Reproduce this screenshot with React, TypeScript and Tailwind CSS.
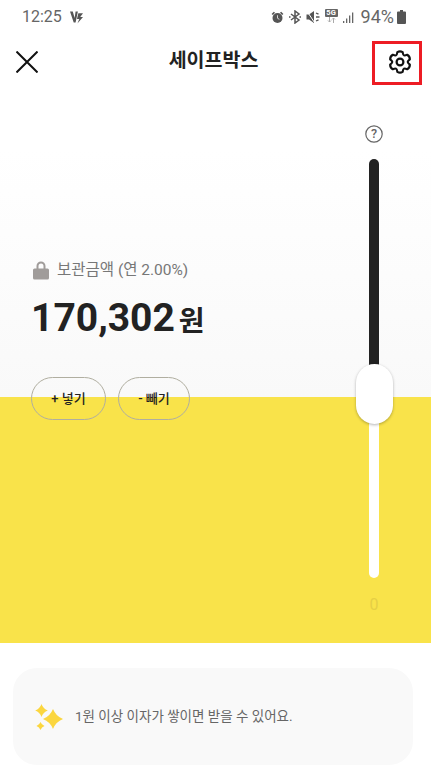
const KR = "font-['Roboto','Noto_Sans_CJK_KR',sans-serif]";

// six rounded lobes, pointy side up
function gearPath(cx: number, cy: number, outer: number, inner: number) {
  const pt = (deg: number, r: number) => {
    const a = (deg * Math.PI) / 180;
    return `${(cx + r * Math.cos(a)).toFixed(2)} ${(cy + r * Math.sin(a)).toFixed(2)}`;
  };
  let d = `M${pt(-120, inner)}`;
  for (let i = 0; i < 6; i++) {
    const a = -90 + i * 60;
    d += ` Q${pt(a - 24, inner * 0.98)} ${pt(a - 15, outer * 0.97)}`;
    d += ` Q${pt(a, outer * 1.08)} ${pt(a + 15, outer * 0.97)}`;
    d += ` Q${pt(a + 24, inner * 0.98)} ${pt(a + 30, inner)}`;
  }
  return d + 'Z';
}

function StatusIcons() {
  return (
    <div className="flex items-center">
      {/* alarm */}
      <svg width="13" height="13" viewBox="0 0 14 14" fill="#555">
        <circle cx="7" cy="7.6" r="5.4" />
        <path d="M0.6 3.2 3 0.8 4.4 2 2 4.4zM13.4 3.2 11 0.8 9.600 2 12 4.400z" />
        <path d="M7 4.600v3.200l2 1.200" stroke="#ddd" strokeWidth="1" fill="none" />
      </svg>
      {/* bluetooth */}
      <svg width="12" height="14" viewBox="0 0 12 14" fill="none" stroke="#555" strokeWidth="1.500" className="ml-[5px]">
        <path d="M2 4l8 6-4 3V1l4 3-8 6" />
        <path d="M0 7h1.500M10.500 7h1.500" />
      </svg>
      {/* mute with vibrate ticks */}
      <svg width="14" height="14" viewBox="0 0 14 14" fill="#555" className="ml-[5px]">
        <path d="M0.500 4.500h2.500L8 1v12L3 9.500H0.500z" />
        <path d="M0.500 0.500l8 12" stroke="#fff" strokeWidth="1" />
        <path d="M10 3l2.500 1.200M10 7h3.500M10 11l2.500-1.200" stroke="#555" strokeWidth="1.300" />
      </svg>
      {/* 5G */}
      <div className="ml-[5px] flex w-[13px] flex-col items-center self-start pt-[1px]">
        <span className="flex h-[8px] w-[13px] items-center justify-center rounded-[1px] bg-[#666] font-['Roboto',sans-serif] text-[7.500px] leading-none font-bold text-white">
          5G
        </span>
        <svg width="9" height="6" viewBox="0 0 9 6" stroke="#aaa" strokeWidth="1" fill="none">
          <path d="M2.500 0v5M1 3.500l1.500 1.500 1.500-1.500M6.500 6V1M5 2.500l1.500-1.500 1.500 1.500" />
        </svg>
      </div>
      {/* signal */}
      <svg width="12" height="13" viewBox="0 0 12 13" fill="#666" className="ml-[5px]">
        <rect x="0" y="10" width="1.300" height="2" />
        <rect x="3" y="7.500" width="1.300" height="4.500" />
        <rect x="6" y="4.500" width="1.300" height="7.500" />
        <rect x="9" y="1.500" width="1.300" height="10.500" />
      </svg>
      <span className="ml-[6px] font-['Roboto',sans-serif] text-[18px] leading-none text-[#666]">94%</span>
      <svg width="9" height="14" viewBox="0 0 9 14" fill="#555" className="ml-[3px]">
        <path d="M3 0h3v1.500h2a1 1 0 0 1 1 1V13a1 1 0 0 1-1 1H1a1 1 0 0 1-1-1V2.500a1 1 0 0 1 1-1h2z" />
      </svg>
    </div>
  );
}

export default function App() {
  return (
    <div className={`flex h-[772px] w-[431px] flex-col overflow-hidden bg-white ${KR}`}>
      {/* Status bar */}
      <div className="flex h-[33px] items-center justify-between pt-[1px] pr-[25px] pl-[22px]">
        <div className="flex items-center gap-[8px]">
          <span className="font-['Roboto',sans-serif] text-[16px] leading-none text-[#666]">12:25</span>
          <svg width="13" height="13" viewBox="0 0 14 13" fill="#555">
            <path d="M0 0h3l2 7 1-7h2.500L6 12H4z" />
            <path d="M9 2h5L11 6h3l-6 7 2-5H7.500z" />
          </svg>
        </div>
        <StatusIcons />
      </div>

      {/* Header */}
      <div className="relative flex h-[57px] items-center justify-center">
        <svg width="22" height="22" viewBox="0 0 22 22" stroke="#111" strokeWidth="2" className="absolute top-[18px] left-[16px]">
          <path d="M0.500 0.500 21.500 21.500M21.500 0.500 0.500 21.500" />
        </svg>
        <h1 className="-mt-[1px] mr-[4px] text-[19.500px] leading-none font-bold text-[#222]">세이프박스</h1>
        <div className="absolute top-[8px] right-[9px] flex h-[44px] w-[50px] items-center justify-center border-[3px] border-[#ed1c24] pb-[2px] pl-[6px]">
          <svg width="24" height="24" viewBox="0 0 24 24" fill="none" stroke="#111" strokeWidth="2.200">
            <path d={gearPath(12, 12, 10.5, 7.8)} strokeLinejoin="round" />
            <circle cx="12" cy="12" r="3.400" />
          </svg>
        </div>
      </div>

      {/* Safe box */}
      <div className="relative flex h-[553px] bg-[linear-gradient(to_bottom,#ffffff_0,#ffffff_60px,#f9f9f9_307px,#f9e34a_307px,#f9e34a_100%)]">
        <div className="flex flex-1 flex-col pt-[171px] pl-[33px]">
          <div className="flex items-center gap-[8px]">
            <svg width="16" height="19" viewBox="0 0 16 19" fill="#a09c9a">
              <path d="M3.500 8V5a4.500 4.500 0 0 1 9 0v3h-2V5a2.500 2.500 0 0 0-5 0v3z" />
              <rect x="0" y="7.500" width="16" height="11" rx="1.500" />
            </svg>
            <span className="text-[15.500px] leading-none text-[#777]">보관금액 (연 2.00%)</span>
          </div>
          <div className="mt-[15px] -ml-[2px] flex items-baseline gap-[4px]">
            <span className="font-['Roboto',sans-serif] text-[39px] leading-[46px] font-bold text-[#222]">170,302</span>
            <span className="text-[28px] leading-none font-bold text-[#222]">원</span>
          </div>
          <div className="mt-[36px] -ml-[2px] flex gap-[12px]">
            <button className="flex h-[43px] w-[75px] items-center justify-center rounded-full border border-[#b0aea0] text-[13px] font-medium text-[#222]">
              + 넣기
            </button>
            <button className="flex h-[43px] w-[72px] items-center justify-center rounded-full border border-[#b0aea0] text-[13px] font-medium text-[#222]">
              - 빼기
            </button>
          </div>
        </div>

        {/* Slider */}
        <div className="mr-[19px] flex w-[76px] flex-col items-center">
          <svg width="18" height="18" viewBox="0 0 18 18" fill="none" className="mt-[35px]">
            <circle cx="9" cy="9" r="8.200" stroke="#666" strokeWidth="1.200" />
            <text x="9" y="13.300" textAnchor="middle" fontSize="12.500" fontWeight="500" fill="#666" fontFamily="Roboto">?</text>
          </svg>
          <div className="relative mt-[16px] flex h-[419px] w-[10px] flex-col">
            <div className="h-[224px] rounded-t-full bg-[#222]" />
            <div className="flex-1 rounded-b-full bg-white" />
            <div className="absolute top-[205px] left-[-13.500px] h-[60px] w-[37px] rounded-[19px] bg-white shadow-[0_1px_3px_rgba(0,0,0,0.3)]" />
          </div>
          <span className="mt-[19px] font-['Roboto',sans-serif] text-[16px] leading-none text-[#e6cf45]">0</span>
        </div>
      </div>

      {/* Notice */}
      <div className="mt-[25px] mr-[18px] ml-[13px] flex h-[97px] items-center gap-[12px] rounded-[24px] bg-[#f9f9f9] pl-[22px]">
        <svg width="28" height="26" viewBox="0 0 28 26" fill="#fbd63f">
          <path d="M18 5Q20.800 12.200 28 15Q20.800 17.800 18 25Q15.200 17.800 8 15Q15.200 12.200 18 5Z" />
          <path d="M6.500 0Q8.200 4.800 12.800 6.500Q8.200 8.200 6.500 13Q4.800 8.200 0.200 6.500Q4.800 4.800 6.500 0Z" />
          <path d="M5.500 18Q6.600 20.900 9.500 22Q6.600 23.100 5.500 26Q4.400 23.100 1.500 22Q4.400 20.900 5.500 18Z" />
        </svg>
        <span className="text-[13.500px] leading-none text-[#666]">1원 이상 이자가 쌓이면 받을 수 있어요.</span>
      </div>
    </div>
  );
}
